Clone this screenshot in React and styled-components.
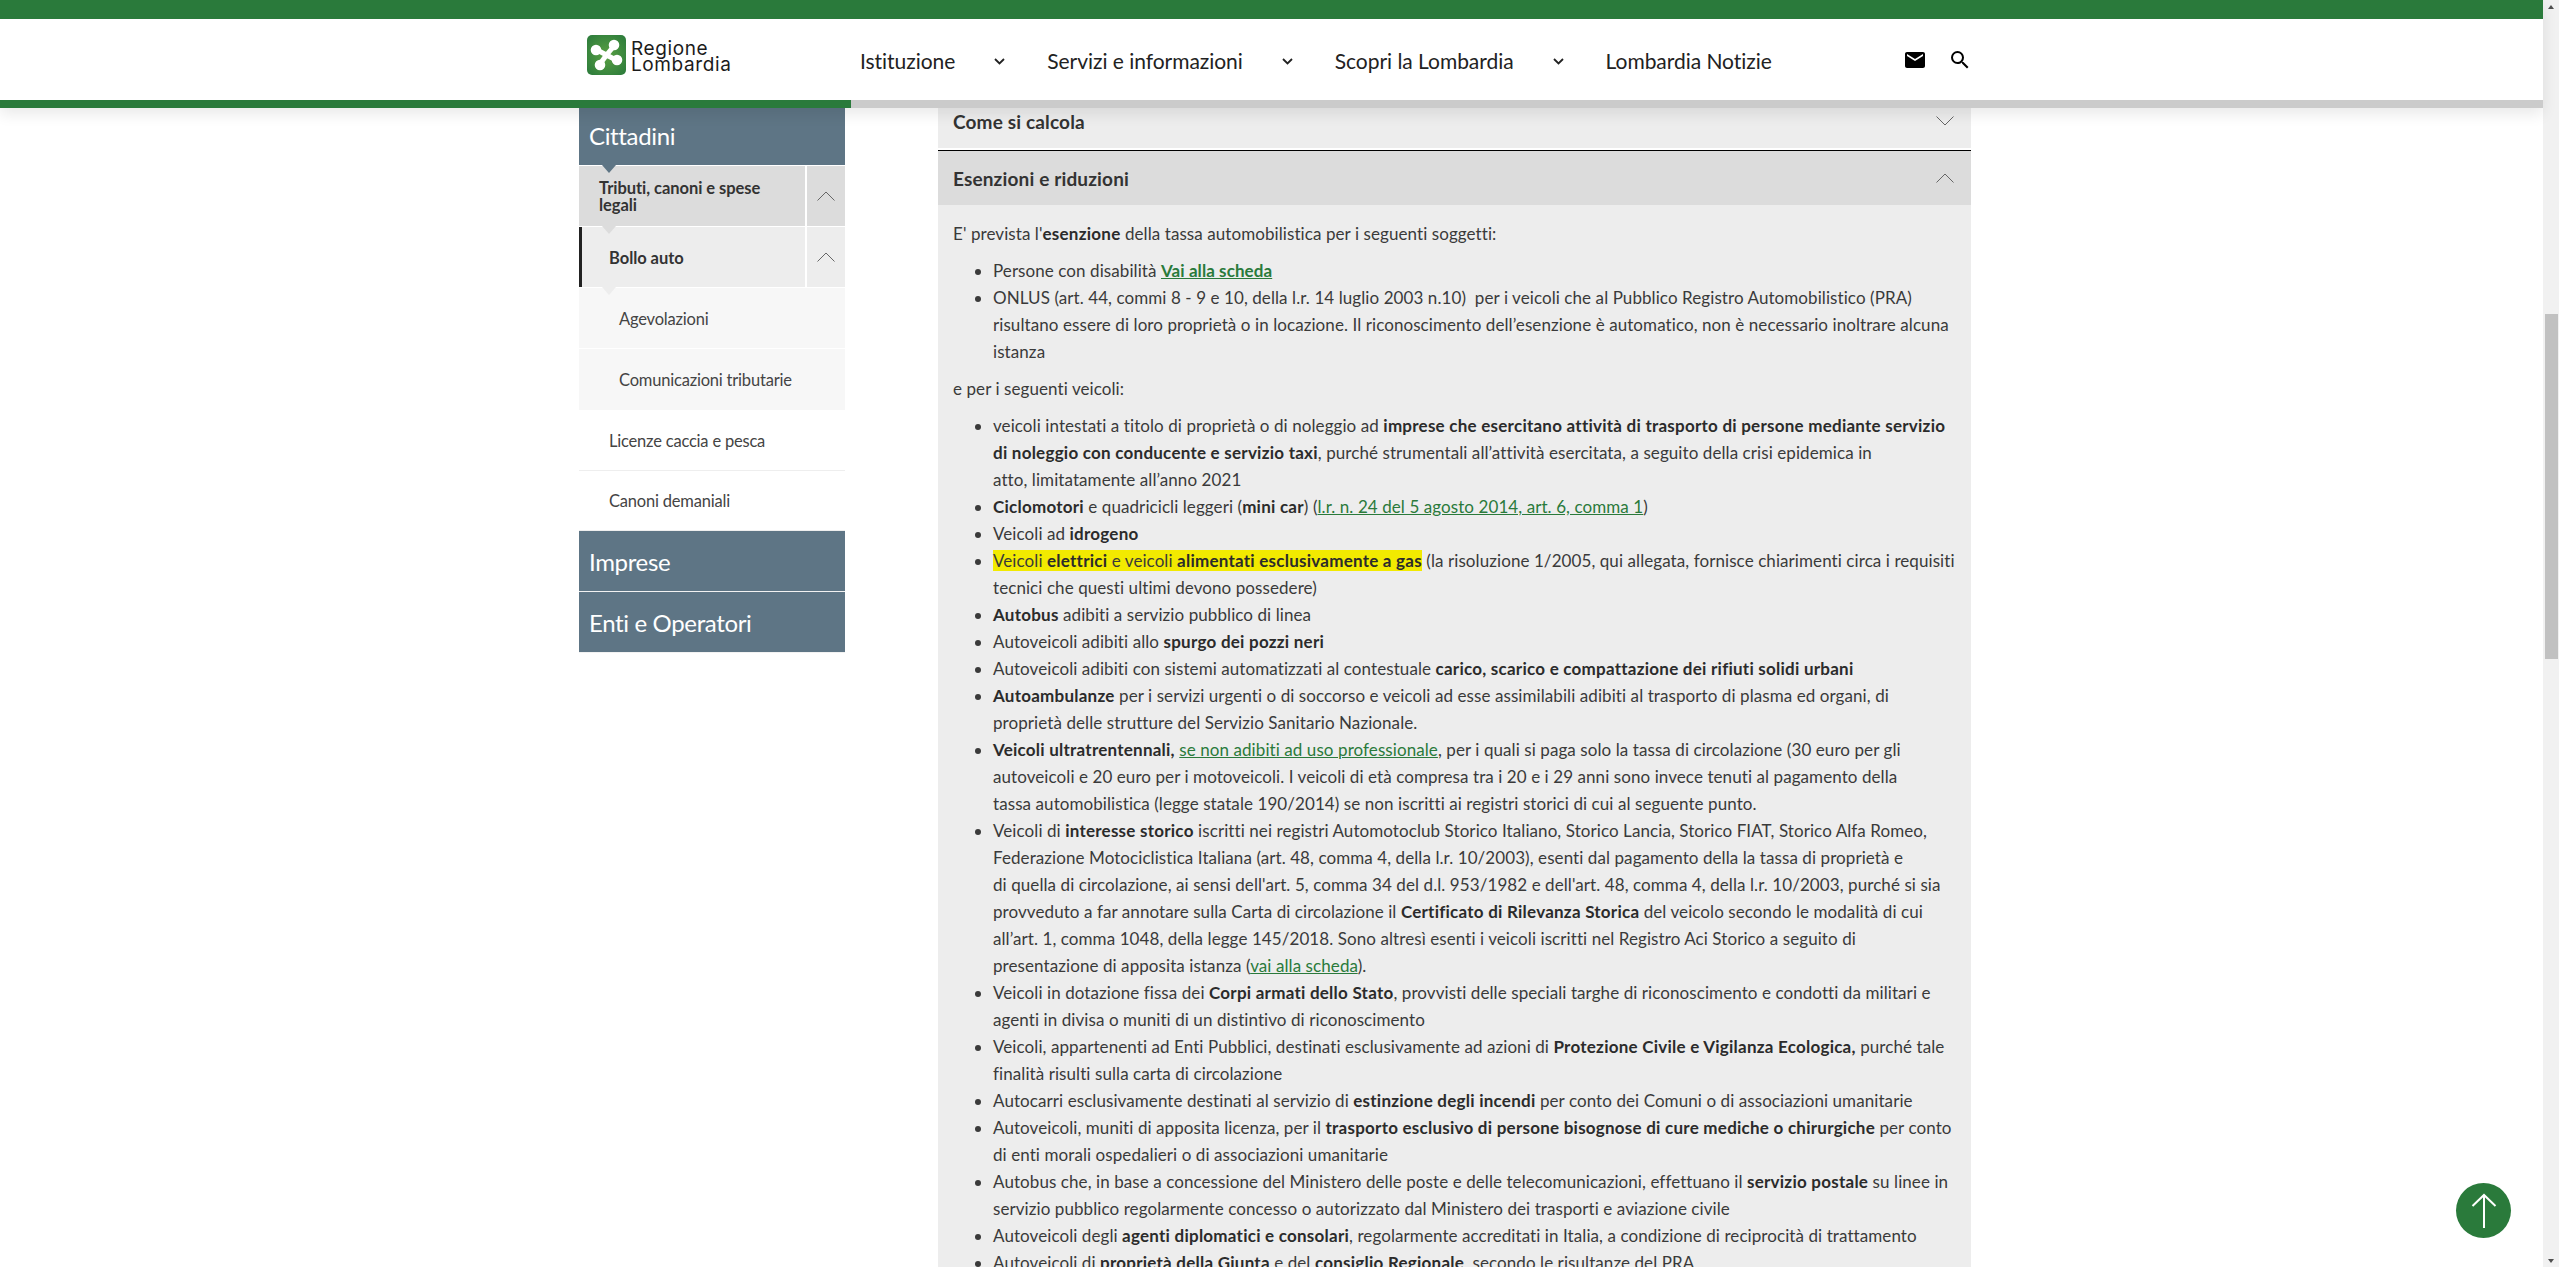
import React from 'react';
import styled, { createGlobalStyle } from 'styled-components';
import { MdEmail, MdSearch } from 'react-icons/md';

const GREEN = '#2a7a3b';
const SLATE = '#5e7585';

const GlobalStyle = createGlobalStyle`
  html, body { margin: 0; padding: 0; height: 100%; overflow: hidden; background: #fff; }
  body { font-family: Lato, "Open Sans", sans-serif; color: #333; }
`;

const Shell = styled.div`
  display: flex;
  height: 100vh;
  overflow: hidden;
`;

const Viewport = styled.div`
  flex: 1;
  min-width: 0;
  display: flex;
  flex-direction: column;
  position: relative;
`;

const Header = styled.header`
  position: relative;
  z-index: 2;
  background: #fff;
  box-shadow: 0 6px 14px rgba(0, 0, 0, 0.09);
`;

const TopStrip = styled.div`
  height: 19px;
  background: ${GREEN};
`;

const NavRow = styled.div`
  height: 81px;
  box-sizing: border-box;
  padding: 16px 0 0 587px;
  display: flex;
  align-items: flex-start;
`;

const Logo = styled.a`
  width: 273px;
  display: flex;
  gap: 5px;
  color: #1b1b1b;
`;

const LogoText = styled.span`
  font-family: Inter, sans-serif;
  font-size: 19px;
  line-height: 16px;
  letter-spacing: 0.6px;
  padding-top: 6px;
`;

const NavLinks = styled.nav`
  display: flex;
  gap: 42px;
  margin-top: 11px;
`;

const NavLink = styled.a`
  display: flex;
  align-items: center;
  font-size: 21px;
  line-height: 30px;
  letter-spacing: -0.04px;
  color: #222;
`;

const Caret = styled.svg`
  width: 11px;
  height: 7px;
  margin: 0 0 0 39px;
  fill: none;
  stroke: #222;
  stroke-width: 1.8;
`;

const NavIcons = styled.div`
  display: flex;
  gap: 21px;
  margin: 13px 0 0 131px;
  color: #000;
  font-size: 24px;
  line-height: 0;
`;

const Progress = styled.div`
  height: 8px;
  background: #cbcbcb;
`;

const ProgressFill = styled.div`
  height: 100%;
  background: ${GREEN};
`;

const Main = styled.main`
  flex: 1;
  min-height: 0;
  display: grid;
  grid-template-columns: 266px 1033px;
  column-gap: 93px;
  align-items: start;
  padding-left: 579px;
`;

const Sidebar = styled.aside`
  display: flex;
  flex-direction: column;
`;

const notch = (color) => `
  &::after {
    content: '';
    position: absolute;
    z-index: 1;
    left: 23px;
    top: 100%;
    border-left: 7px solid transparent;
    border-right: 7px solid transparent;
    border-top: 8px solid ${color};
  }
`;

const Section = styled.a`
  position: relative;
  height: 61px;
  box-sizing: border-box;
  padding-left: 10px;
  display: flex;
  align-items: center;
  background: ${SLATE};
  color: #fff;
  font-size: 24px;
  letter-spacing: -0.35px;
  border-bottom: 1px solid #f2f2f2;
  ${(p) => p.$first && `
    height: 58px;
    padding-bottom: 2px;
    border-bottom-color: #fff;
  `}
  ${(p) => p.$first && notch(SLATE)}
`;

const TreeRow = styled.div`
  position: relative;
  height: 61px;
  box-sizing: border-box;
  display: flex;
  align-items: stretch;
  background: ${(p) => p.$bg};
  border-bottom: 1px solid #fff;
  ${(p) => p.$bar && 'box-shadow: inset 3px 0 0 #222;'}
  ${(p) => notch(p.$bg)}
`;

const TreeLabel = styled.a`
  flex: 1;
  display: flex;
  align-items: center;
  padding: 2px 20px 0 ${(p) => p.$indent}px;
  font-size: 16.5px;
  line-height: 17px;
  font-weight: 700;
  letter-spacing: -0.05px;
  color: #333;
`;

const TreeToggle = styled.button`
  width: 40px;
  padding: 0;
  background: none;
  border: 0;
  border-left: 2px solid #fff;
  display: flex;
  align-items: center;
  justify-content: center;
`;

const SubItem = styled.a`
  height: ${(p) => p.$h}px;
  box-sizing: border-box;
  display: flex;
  align-items: center;
  padding-left: ${(p) => p.$indent}px;
  padding-top: 1px;
  font-size: 16.5px;
  letter-spacing: -0.2px;
  color: #444;
  background: ${(p) => p.$bg};
  border-bottom: 1px solid ${(p) => p.$line};
`;

const Chevron = styled.svg`
  width: 18px;
  height: 10px;
  fill: none;
  stroke: #666;
  stroke-width: 1;
`;

const Accordion = styled.section`
  margin-top: -14px;
`;

const AccHead = styled.div`
  height: ${(p) => p.$h}px;
  box-sizing: border-box;
  padding: 0 17px 0 15px;
  display: flex;
  align-items: center;
  justify-content: space-between;
  background: ${(p) => p.$bg};
  font-size: 19px;
  font-weight: 700;
  letter-spacing: 0.15px;
  color: #333;
  ${(p) => p.$open && `
    margin-top: 2px;
    border-top: 1px solid #000;
  `}
`;

const AccBody = styled.div`
  background: #ededed;
  padding: 15px 15px 0;
  font-size: 17px;
  line-height: 27px;
  letter-spacing: 0.08px;
  color: #3a3a3a;
  white-space: nowrap;
`;

const Para = styled.p`
  margin: 0 0 10px;
`;

const List = styled.ul`
  margin: 0 0 10px;
  padding: 0 0 0 40px;
`;

const Strong = styled.b`
  font-weight: 700;
  color: #2b2b2b;
  letter-spacing: 0.24px;
`;

const TextLink = styled.a`
  color: ${GREEN};
  text-decoration: underline;
  font-weight: ${(p) => (p.$bold ? 700 : 400)};
`;

const Mark = styled.span`
  background: #f2ea00;
`;

const ToTop = styled.a`
  position: absolute;
  right: 32px;
  bottom: 29px;
  width: 55px;
  height: 55px;
  z-index: 3;
  border-radius: 50%;
  background: ${GREEN};
  display: flex;
  align-items: center;
  justify-content: center;
`;

const Scrollbar = styled.div`
  position: relative;
  width: 16px;
  flex: none;
  background: #f1f1f1;
  &::before, &::after {
    content: '';
    position: absolute;
    left: 5px;
    border-left: 3.5px solid transparent;
    border-right: 3.5px solid transparent;
  }
  &::before { top: 5px; border-bottom: 4px solid #505050; }
  &::after { bottom: 4px; border-top: 4px solid #505050; }
`;

const ScrollThumb = styled.div`
  height: 345px;
  margin: 314px 1px 0 2px;
  background: #c1c1c1;
`;

const ChevUp = () => (
  <Chevron viewBox="0 0 18 10"><path d="M0.5 9.5 9 1l8.5 8.5" /></Chevron>
);

const ChevDown = () => (
  <Chevron viewBox="0 0 18 10"><path d="M0.5 0.5 9 9l8.5-8.5" /></Chevron>
);

const NavCaret = () => (
  <Caret viewBox="0 0 11 7"><path d="M1 1l4.5 4.5L10 1" /></Caret>
);

const LogoMark = () => (
  <svg width="39" height="40" viewBox="0 0 39 40">
    <defs>
      <radialGradient id="lg" cx="50%" cy="50%" r="70%">
        <stop offset="0" stopColor="#5aa043" />
        <stop offset="1" stopColor="#2a7a3b" />
      </radialGradient>
    </defs>
    <rect width="39" height="40" rx="5" fill="url(#lg)" />
    <g stroke="#fff" strokeWidth="5" strokeLinecap="round" fill="#fff">
      <path d="M19.5 20 L27 11 M19.5 20 L29 25 M19.5 20 L13 29 M19.5 20 L10 15" />
      <circle cx="27" cy="10" r="2.8" />
      <circle cx="30" cy="25" r="2.8" />
      <circle cx="13" cy="30" r="2.8" />
      <circle cx="9" cy="15" r="2.8" />
    </g>
  </svg>
);

const navItems = [
  { label: 'Istituzione', caret: true },
  { label: 'Servizi e informazioni', caret: true },
  { label: 'Scopri la Lombardia', caret: true },
  { label: 'Lombardia Notizie', caret: false },
];

export default function App() {
  return (
    <Shell>
      <GlobalStyle />
      <Viewport>
        <Header>
          <TopStrip />
          <NavRow>
            <Logo>
              <LogoMark />
              <LogoText>Regione<br />Lombardia</LogoText>
            </Logo>
            <NavLinks>
              {navItems.map((item) => (
                <NavLink key={item.label}>
                  {item.label}
                  {item.caret && <NavCaret />}
                </NavLink>
              ))}
            </NavLinks>
            <NavIcons>
              <MdEmail />
              <MdSearch />
            </NavIcons>
          </NavRow>
          <Progress>
            <ProgressFill style={{ width: `${(851 / 2543) * 100}%` }} />
          </Progress>
        </Header>
        <Main>
          <Sidebar>
            <Section $first>Cittadini</Section>
            <TreeRow $bg="#dcdcdc">
              <TreeLabel $indent={20}>Tributi, canoni e spese<br />legali</TreeLabel>
              <TreeToggle><ChevUp /></TreeToggle>
            </TreeRow>
            <TreeRow $bg="#ededed" $bar>
              <TreeLabel $indent={30}>Bollo auto</TreeLabel>
              <TreeToggle><ChevUp /></TreeToggle>
            </TreeRow>
            <SubItem $indent={40} $h={61} $bg="#f7f7f7" $line="#fff">Agevolazioni</SubItem>
            <SubItem $indent={40} $h={61} $bg="#f7f7f7" $line="#f7f7f7">Comunicazioni tributarie</SubItem>
            <SubItem $indent={30} $h={61} $bg="#fff" $line="#eee">Licenze caccia e pesca</SubItem>
            <SubItem $indent={30} $h={60} $bg="#fff" $line="#eee">Canoni demaniali</SubItem>
            <Section>Imprese</Section>
            <Section>Enti e Operatori</Section>
          </Sidebar>
          <Accordion>
            <AccHead $h={54} $bg="#ededed">Come si calcola<ChevDown /></AccHead>
            <AccHead $h={55} $bg="#dcdcdc" $open>Esenzioni e riduzioni<ChevUp /></AccHead>
            <AccBody>
              <Para>E' prevista l'<Strong>esenzione</Strong> della tassa automobilistica per i seguenti soggetti:</Para>
              <List>
                <li>Persone con disabilità <TextLink $bold>Vai alla scheda</TextLink></li>
                <li>ONLUS (art. 44, commi 8 - 9 e 10, della l.r. 14 luglio 2003 n.10)&nbsp; per i veicoli che al Pubblico Registro Automobilistico (PRA)<br />
                  risultano essere di loro proprietà o in locazione. Il riconoscimento dell’esenzione è automatico, non è necessario inoltrare alcuna<br />
                  istanza</li>
              </List>
              <Para>e per i seguenti veicoli:</Para>
              <List>
                <li>veicoli intestati a titolo di proprietà o di noleggio ad <Strong>imprese che esercitano attività di trasporto di persone mediante servizio<br />
                  di noleggio con conducente e servizio taxi</Strong>, purché strumentali all’attività esercitata, a seguito della crisi epidemica in<br />
                  atto, limitatamente all’anno 2021</li>
                <li><Strong>Ciclomotori</Strong> e quadricicli leggeri (<Strong>mini car</Strong>) (<TextLink>l.r. n. 24 del 5 agosto 2014, art. 6, comma 1</TextLink>)</li>
                <li>Veicoli ad <Strong>idrogeno</Strong></li>
                <li><Mark>Veicoli <Strong>elettrici</Strong> e veicoli <Strong>alimentati esclusivamente a gas</Strong></Mark> (la risoluzione 1/2005, qui allegata, fornisce chiarimenti circa i requisiti<br />
                  tecnici che questi ultimi devono possedere)</li>
                <li><Strong>Autobus</Strong> adibiti a servizio pubblico di linea</li>
                <li>Autoveicoli adibiti allo <Strong>spurgo dei pozzi neri</Strong></li>
                <li>Autoveicoli adibiti con sistemi automatizzati al contestuale <Strong>carico, scarico e compattazione dei rifiuti solidi urbani</Strong></li>
                <li><Strong>Autoambulanze</Strong> per i servizi urgenti o di soccorso e veicoli ad esse assimilabili adibiti al trasporto di plasma ed organi, di<br />
                  proprietà delle strutture del Servizio Sanitario Nazionale.</li>
                <li><Strong>Veicoli ultratrentennali,</Strong> <TextLink>se non adibiti ad uso professionale</TextLink>, per i quali si paga solo la tassa di circolazione (30 euro per gli<br />
                  autoveicoli e 20 euro per i motoveicoli. I veicoli di età compresa tra i 20 e i 29 anni sono invece tenuti al pagamento della<br />
                  tassa automobilistica (legge statale 190/2014) se non iscritti ai registri storici di cui al seguente punto.</li>
                <li>Veicoli di <Strong>interesse storico</Strong> iscritti nei registri Automotoclub Storico Italiano, Storico Lancia, Storico FIAT, Storico Alfa Romeo,<br />
                  Federazione Motociclistica Italiana (art. 48, comma 4, della l.r. 10/2003), esenti dal pagamento della la tassa di proprietà e<br />
                  di quella di circolazione, ai sensi dell'art. 5, comma 34 del d.l. 953/1982 e dell'art. 48, comma 4, della l.r. 10/2003, purché si sia<br />
                  provveduto a far annotare sulla Carta di circolazione il <Strong>Certificato di Rilevanza Storica</Strong> del veicolo secondo le modalità di cui<br />
                  all’art. 1, comma 1048, della legge 145/2018. Sono altresì esenti i veicoli iscritti nel Registro Aci Storico a seguito di<br />
                  presentazione di apposita istanza (<TextLink>vai alla scheda</TextLink>).</li>
                <li>Veicoli in dotazione fissa dei <Strong>Corpi armati dello Stato</Strong>, provvisti delle speciali targhe di riconoscimento e condotti da militari e<br />
                  agenti in divisa o muniti di un distintivo di riconoscimento</li>
                <li>Veicoli, appartenenti ad Enti Pubblici, destinati esclusivamente ad azioni di <Strong>Protezione Civile e Vigilanza Ecologica,</Strong> purché tale<br />
                  finalità risulti sulla carta di circolazione</li>
                <li>Autocarri esclusivamente destinati al servizio di <Strong>estinzione degli incendi</Strong> per conto dei Comuni o di associazioni umanitarie</li>
                <li>Autoveicoli, muniti di apposita licenza, per il <Strong>trasporto esclusivo di persone bisognose di cure mediche o chirurgiche</Strong> per conto<br />
                  di enti morali ospedalieri o di associazioni umanitarie</li>
                <li>Autobus che, in base a concessione del Ministero delle poste e delle telecomunicazioni, effettuano il <Strong>servizio postale</Strong> su linee in<br />
                  servizio pubblico regolarmente concesso o autorizzato dal Ministero dei trasporti e aviazione civile</li>
                <li>Autoveicoli degli <Strong>agenti diplomatici e consolari</Strong>, regolarmente accreditati in Italia, a condizione di reciprocità di trattamento</li>
                <li>Autoveicoli di <Strong>proprietà della Giunta</Strong> e del <Strong>consiglio Regionale</Strong>, secondo le risultanze del PRA</li>
              </List>
            </AccBody>
          </Accordion>
        </Main>
        <ToTop>
          <svg width="26" height="36" viewBox="0 0 26 36" fill="none" stroke="#fff" strokeWidth="2">
            <path d="M13 35V2M1.5 13 13 2l11.5 11" />
          </svg>
        </ToTop>
      </Viewport>
      <Scrollbar><ScrollThumb /></Scrollbar>
    </Shell>
  );
}
